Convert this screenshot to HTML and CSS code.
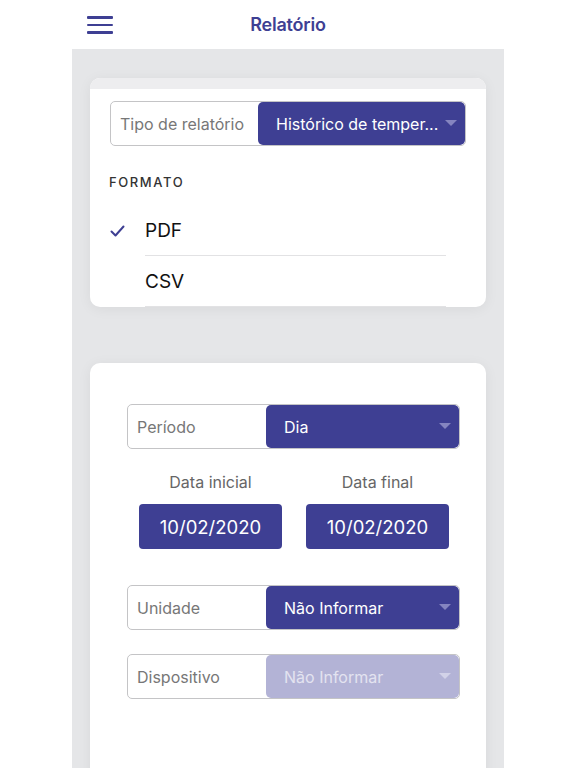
FILE: index.html
```html
<!DOCTYPE html>
<html lang="pt">
<head>
    <meta charset="UTF-8">
    <meta name="viewport" content="width=device-width, initial-scale=1.0">
    <title>Relatório</title>
    <link rel="stylesheet" href="styles.css">
</head>
<body>
    <header class="topbar">
        <div class="menu">
            <span></span><span></span><span></span>
        </div>
        <h1>Relatório</h1>
    </header>

    <main class="content">
        <section class="card card-format">
            <div class="card-strip"></div>
            <div class="card-body">
                <div class="select">
                    <div class="select-label">Tipo de relatório</div>
                    <div class="select-value">
                        <span>Histórico de temper...</span>
                        <i class="arrow"></i>
                    </div>
                </div>

                <h3 class="section-title">FORMATO</h3>
                <ul class="options">
                    <li class="option checked">
                        <svg class="check" width="15" height="12" viewBox="0 0 15 12">
                            <path d="M1.5 6.5 L5.5 10.5 L13.5 1.5" fill="none" stroke="#3e3f93" stroke-width="2" stroke-linecap="round" stroke-linejoin="round"/>
                        </svg>
                        <span>PDF</span>
                    </li>
                    <li class="option">
                        <span>CSV</span>
                    </li>
                </ul>
            </div>
        </section>

        <section class="card card-filters">
            <div class="select">
                <div class="select-label">Período</div>
                <div class="select-value">
                    <span>Dia</span>
                    <i class="arrow"></i>
                </div>
            </div>

            <div class="dates">
                <div class="date">
                    <p>Data inicial</p>
                    <button>10/02/2020</button>
                </div>
                <div class="date">
                    <p>Data final</p>
                    <button>10/02/2020</button>
                </div>
            </div>

            <div class="select">
                <div class="select-label">Unidade</div>
                <div class="select-value">
                    <span>Não Informar</span>
                    <i class="arrow"></i>
                </div>
            </div>

            <div class="select disabled">
                <div class="select-label">Dispositivo</div>
                <div class="select-value">
                    <span>Não Informar</span>
                    <i class="arrow"></i>
                </div>
            </div>
        </section>
    </main>
</body>
</html>
```

FILE: styles.css
```css
body {
    margin: 0;
    font-family: Inter, "Noto Sans", sans-serif;
    color: #222;
    background: #ffffff;
}

.topbar {
    height: 49px;
    display: flex;
    align-items: center;
    justify-content: center;
    position: relative;
    background: #fff;
}

.topbar h1 {
    margin: 0;
    font-size: 18px;
    font-weight: 600;
    color: #3e3f93;
    letter-spacing: -0.2px;
}

.menu {
    position: absolute;
    left: 87px;
    top: 16px;
    width: 26px;
    display: flex;
    flex-direction: column;
    gap: 5px;
}

.menu span {
    display: block;
    height: 2.5px;
    background: #3e3f93;
    border-radius: 1px;
}

.content {
    width: 432px;
    height: 719px;
    margin: 0 auto;
    background: #e5e6e8;
    padding: 29px 18px 0;
    box-sizing: border-box;
    overflow: hidden;
}

.card {
    background: #fff;
    border-radius: 10px;
    box-shadow: 0 2px 14px rgba(0, 0, 0, 0.06);
}

.card-format {
    overflow: hidden;
}

.card-strip {
    height: 11px;
    background: #ededef;
}

.card-body {
    padding: 12px 20px 0;
}

.select {
    display: flex;
    height: 45px;
    border: 1px solid #c4c4c6;
    border-radius: 5px;
    box-sizing: border-box;
    overflow: hidden;
}

.select-label {
    width: 138px;
    flex-shrink: 0;
    display: flex;
    align-items: center;
    padding-left: 9px;
    font-size: 16px;
    color: #777;
}

.select-value {
    flex: 1;
    display: flex;
    align-items: center;
    justify-content: space-between;
    padding: 0 8px 0 18px;
    background: #3e3f93;
    color: #fff;
    font-size: 16px;
    border-radius: 5px;
}

.arrow {
    width: 0;
    height: 0;
    border-left: 6px solid transparent;
    border-right: 6px solid transparent;
    border-top: 6px solid #8585c0;
    margin-bottom: 2px;
}

.select.disabled .select-value {
    background: #b3b3d6;
    color: #e3e3f0;
}

.select.disabled .arrow {
    border-top-color: #d2d2e8;
}

.section-title {
    margin: 28px 0 0 -1px;
    font-size: 13px;
    font-weight: 500;
    letter-spacing: 1.6px;
    color: #333;
}

.options {
    list-style: none;
    margin: 15px 0 0;
    padding: 0;
}

.option {
    height: 50px;
    margin-left: 35px;
    margin-right: 20px;
    display: flex;
    align-items: center;
    position: relative;
    font-size: 19px;
    color: #111;
    border-bottom: 1px solid #e2e2e4;
}

.check {
    position: absolute;
    left: -35px;
    top: 20px;
}

.card-filters {
    margin-top: 56px;
    height: 420px;
    padding: 41px 26px 0 37px;
}

.card-filters .select-label {
    width: 129px;
}

.dates {
    display: flex;
    justify-content: center;
    gap: 24px;
    margin: 23px 0 36px;
    padding-left: 1px;
}

.date {
    display: flex;
    flex-direction: column;
    align-items: center;
}

.date p {
    margin: 0 0 12px;
    font-size: 16px;
    color: #666;
}

.date button {
    width: 143px;
    height: 45px;
    border: none;
    border-radius: 4px;
    background: #3e3f93;
    color: #fff;
    font-family: inherit;
    font-size: 18.5px;
}

.card-filters .select.disabled {
    margin-top: 24px;
}
```
